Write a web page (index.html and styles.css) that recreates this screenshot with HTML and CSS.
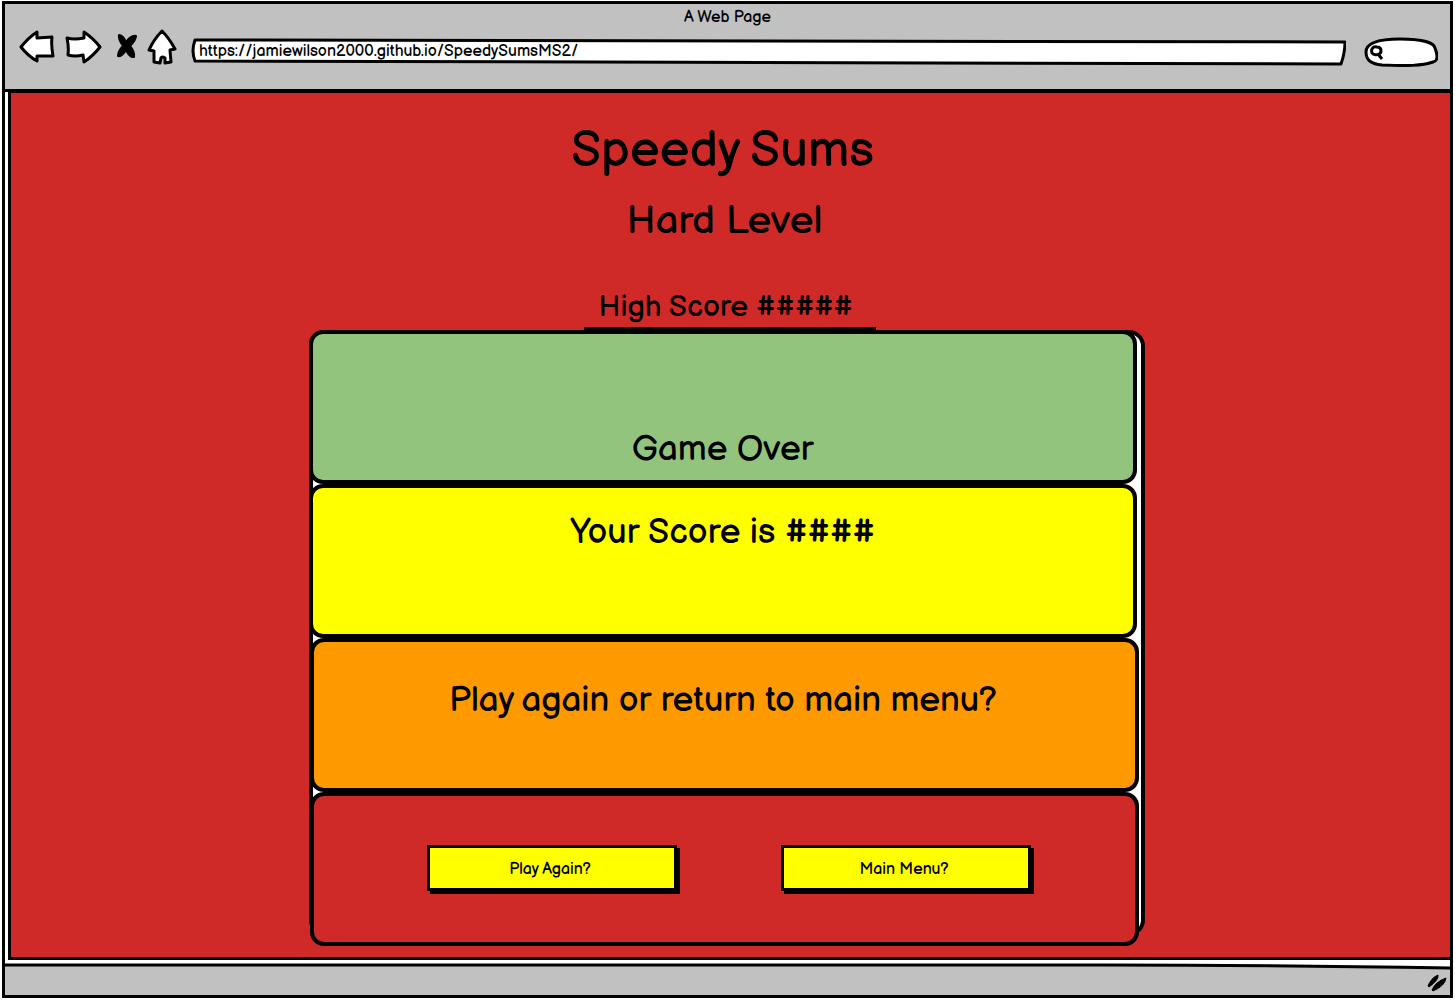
FILE: index.html
```html
<!DOCTYPE html>
<html lang="en">
<head>
<meta charset="utf-8">
<meta name="viewport" content="width=device-width, initial-scale=1">
<title>Speedy Sums</title>
<link rel="stylesheet" href="styles.css">
</head>
<body>
<div class="window">
  <header class="chrome">
    <p class="chrome-title">A Web Page</p>
    <div class="toolbar">
      <button class="tool" type="button" aria-label="Back">
        <svg width="36" height="34" viewBox="0 0 36 34"><path d="M2 17 Q9 8 18 2 L18 8 L33 7 Q32 15 34 26 L18 26 L18 31 Q9 26 2 17Z"/></svg>
      </button>
      <button class="tool" type="button" aria-label="Forward">
        <svg width="38" height="34" viewBox="0 0 38 34"><path d="M3 8 Q10 10 20 8 L20 2 Q29 8 36 17 Q29 26 20 32 L19 25 Q11 27 4 25 Q5 17 3 8Z"/></svg>
      </button>
      <button class="tool stop" type="button" aria-label="Stop">
        <svg width="22" height="30" viewBox="0 0 22 30"><path class="solid" d="M3 3 Q7 3 10 10 Q15 3 20 4 Q20 8 14 14 Q19 20 18 25 Q14 26 10 18 Q6 25 2 24 Q2 19 7 14 Q2 7 3 3Z"/></svg>
      </button>
      <button class="tool" type="button" aria-label="Home">
        <svg width="30" height="36" viewBox="0 0 30 36"><path d="M15 2 Q22 9 28 20 L23 21 L24 33 L18 34 L18 29 Q15 27 14 29 L13 34 L7 33 L7 22 L2 21 Q7 10 15 2Z"/></svg>
      </button>
      <form class="address">
        <svg class="outline" viewBox="0 0 1154 28" preserveAspectRatio="none" aria-hidden="true"><path d="M4 2 L1153 4 Q1153 15 1149 26 L4 23 Q0 13 4 2Z"/></svg>
        <input class="address-input" type="text" aria-label="Address" value="https://jamiewilson2000.github.io/SpeedySumsMS2/">
      </form>
      <form class="search">
        <svg class="outline" viewBox="0 0 74 30" preserveAspectRatio="none" aria-hidden="true"><path d="M2 15 C2 6 14 2 36 2 C56 2 70 5 71 11 C74 19 74 24 69 25 C58 29 43 29 18 28 C8 27 2 24 2 15Z"/></svg>
        <svg class="lens" width="14" height="16" viewBox="0 0 14 16" aria-hidden="true"><path d="M7 2 C2 1 1 5 2 8 C4 11 11 10 11 6 C11 3 9 2 7 2Z M8 9 L12 14"/></svg>
        <input class="search-input" type="search" aria-label="Search">
      </form>
    </div>
  </header>

  <div class="viewport">
    <main class="page">
      <div class="game">
        <h1 class="title">Speedy Sums</h1>
        <h2 class="level">Hard Level</h2>
        <div class="score-row">
          <p class="high-score">High Score #####</p>
        </div>
        <div class="board">
          <section class="panel panel-green"><p>Game Over</p></section>
          <section class="panel panel-yellow"><p>Your Score is ####</p></section>
          <section class="panel panel-orange"><p>Play again or return to main menu?</p></section>
          <section class="panel panel-red">
            <button class="choice" type="button">Play Again?</button>
            <button class="choice" type="button">Main Menu?</button>
          </section>
        </div>
      </div>
    </main>
  </div>

  <footer class="status">
    <svg class="edge" viewBox="0 0 1448 8" preserveAspectRatio="none" aria-hidden="true"><path d="M0 0H1448V4Q1300 2 1100 2L0 1Z" fill="#fff"/><path d="M0 2 L1100 2 Q1250 2 1448 5" fill="none" stroke="#000" stroke-width="3"/></svg>
    <svg class="grip" width="22" height="18" viewBox="0 0 22 18" aria-hidden="true"><path d="M2 12 Q5 4 12 1 Q13 6 3 13Z M6 16 Q9 8 20 4 Q19 12 7 17Z" stroke="#000"/></svg>
  </footer>
</div>
</body>
</html>
```
FILE: styles.css
```css
* {
  box-sizing: border-box;
}

body {
  margin: 0;
  padding: 1px 2px 2px;
  background: #fff;
  color: #000;
  font-family: "Balsamiq Sans", Lato, sans-serif;
  font-size: 16px;
  font-weight: 500;
}

h1,
h2,
p {
  margin: 0;
  font-weight: inherit;
}

button,
input {
  font: inherit;
  color: inherit;
}

.window {
  display: flex;
  flex-direction: column;
  min-height: calc(100vh - 3px);
  border: 3px solid #000;
}

/* Browser chrome */
.chrome {
  height: 88px;
  padding-top: 4px;
  border-bottom: 3px solid #000;
  background: #c1c1c1;
}

.chrome-title {
  line-height: 20px;
  text-align: center;
}

.toolbar {
  display: flex;
  align-items: center;
  gap: 9px;
  height: 38px;
  padding: 0 12px 0 14px;
}

.tool {
  display: flex;
  padding: 0;
  border: 0;
  background: none;
}

.tool path {
  fill: #fff;
  stroke: #000;
  stroke-width: 3;
  stroke-linejoin: round;
}

.tool .solid {
  fill: #000;
  stroke-width: 2;
}

.stop {
  margin-left: 5px;
}

.address,
.search {
  position: relative;
  height: 28px;
}

.address {
  flex: 1;
  margin: 10px 9px 0 5px;
}

.search {
  width: 74px;
  height: 30px;
  margin-top: 10px;
}

.outline {
  position: absolute;
  inset: 0;
  width: 100%;
  height: 100%;
}

.outline path {
  fill: #fff;
  stroke: #000;
  stroke-width: 3;
  stroke-linejoin: round;
  vector-effect: non-scaling-stroke;
}

.address-input,
.search-input {
  position: relative;
  width: 100%;
  height: 100%;
  padding: 0 8px;
  border: 0;
  outline: 0;
  background: none;
}

.address-input {
  padding-bottom: 2px;
}

.search-input {
  padding-left: 20px;
}

.lens {
  position: absolute;
  left: 6px;
  top: 8px;
  fill: none;
  stroke: #000;
  stroke-width: 3;
}

/* Page area */
.viewport {
  display: flex;
  flex: 1;
  padding: 0 0 3px 3px;
  background: #fff;
}

.page {
  flex: 1;
  padding: 30px 16px 10px 8px;
  border: solid #000;
  border-width: 1px 0 3px 3px;
  background: #cf2a28;
}

.game {
  max-width: 836px;
  margin: 0 auto;
  text-align: center;
}

.title {
  margin-right: 8px;
  font-size: 50px;
  line-height: 56px;
}

.level {
  margin: 18px 4px 0 0;
  font-size: 40px;
  line-height: 48px;
}

.score-row {
  display: flex;
  justify-content: center;
  margin-top: 42px;
  padding-left: 6px;
}

.high-score {
  width: 292px;
  padding-right: 8px;
  border-bottom: 3px solid #000;
  font-size: 30px;
  line-height: 40px;
}

.board {
  position: relative;
  padding-right: 8px;
}

.board::before {
  content: "";
  position: absolute;
  inset: 0 0 10px;
  border: 4px solid #000;
  border-radius: 16px;
  background: #fff;
}

.panel {
  position: relative;
  height: 154px;
  border: 4px solid #000;
  border-radius: 14px;
  font-size: 35px;
  line-height: 44px;
}

.panel-green {
  padding-top: 94px;
  background: #93c47d;
}

.panel-yellow {
  padding-top: 23px;
  background: #ff0;
}

.panel-orange {
  margin: 0 -2px 0 1px;
  padding: 37px 2px 0 0;
  background: #f90;
}

.panel-red {
  display: flex;
  justify-content: center;
  align-items: center;
  gap: 104px;
  margin: 0 -2px 0 1px;
  padding: 0 0 2px 10px;
  background: #cf2a28;
}

.choice {
  width: 250px;
  height: 46px;
  padding: 0 4px 0 0;
  border: 3px solid #000;
  background: #ff0;
  box-shadow: 3px 3px #000;
  font-size: 16px;
}

/* Status bar */
.status {
  position: relative;
  display: flex;
  justify-content: flex-end;
  align-items: center;
  height: 32px;
  padding: 8px 2px 0;
  background: #c1c1c1;
}

.edge {
  position: absolute;
  inset: 0 0 auto;
  width: 100%;
  height: 8px;
}
```
